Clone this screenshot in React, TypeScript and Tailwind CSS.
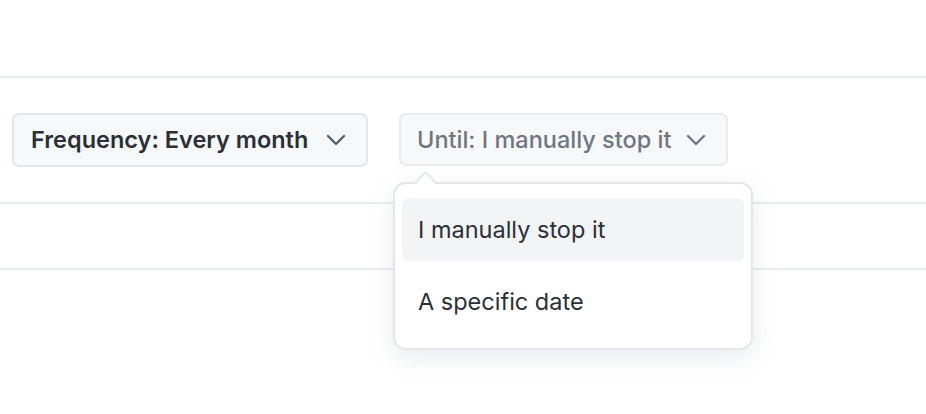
function Chevron() {
  return (
    <svg width="20" height="12" viewBox="0 0 20 12" className="shrink-0" fill="none">
      <path d="M2 2l8 8 8-8" stroke="currentColor" strokeWidth="2.4" strokeLinecap="round" strokeLinejoin="round" />
    </svg>
  );
}

export default function App() {
  return (
    <div
      className="h-[414px] w-[926px] overflow-hidden bg-white text-[#1f2328]"
      style={{ fontFamily: "Inter, 'Noto Sans', sans-serif" }}
    >
      <div className="h-[76px]" />
      <div className="border-t-2 border-[#e8ebef]">
        <div className="flex items-start gap-[31px] px-3 pt-[35px] pb-[35px]">
          <button className="flex h-[54px] w-[356px] items-center rounded-[7px] border-2 border-[#e3e7eb] bg-[#f6f8fa] pl-[17px] pr-[20px] text-[23.5px] font-semibold text-[#2a3038]">
            <span>Frequency: Every month</span>
            <span className="ml-auto text-[#57606a]">
              <Chevron />
            </span>
          </button>

          <div className="relative">
            <button className="flex h-[53px] w-[329px] items-center rounded-[7px] border-2 border-[#e8ebef] bg-[#f6f8fa] pl-[16px] pr-[20px] text-[23.5px] font-medium text-[#6e7781]">
              <span>Until: I manually stop it</span>
              <span className="ml-auto text-[#6e7781]">
                <Chevron />
              </span>
            </button>

            {/* caret */}
            <div className="absolute left-[19px] top-[61px] z-20 h-[15px] w-[15px] rotate-45 border-l-2 border-t-2 border-[#e3e6ea] bg-white" />

            <div className="absolute left-[-6px] top-[69px] z-10 w-[360px] rounded-[13px] border-2 border-[#e3e6ea] bg-white px-[7px] pt-[14px] pb-[5px] shadow-[0_8px_24px_rgba(140,149,159,0.2)]">
              <div className="flex h-[63px] items-center rounded-[7px] bg-[#f3f4f6] px-[16px] text-[23.5px] text-[#2a3038]">
                I manually stop it
              </div>
              <div className="flex h-[82px] items-center px-[16px] text-[23.5px] text-[#2a3038]">
                A specific date
              </div>
            </div>
          </div>
        </div>
      </div>
      <div className="h-[66px] border-t-2 border-[#e8ebef] bg-white" />
      <div className="border-t-2 border-[#e8ebef]" />
    </div>
  );
}
